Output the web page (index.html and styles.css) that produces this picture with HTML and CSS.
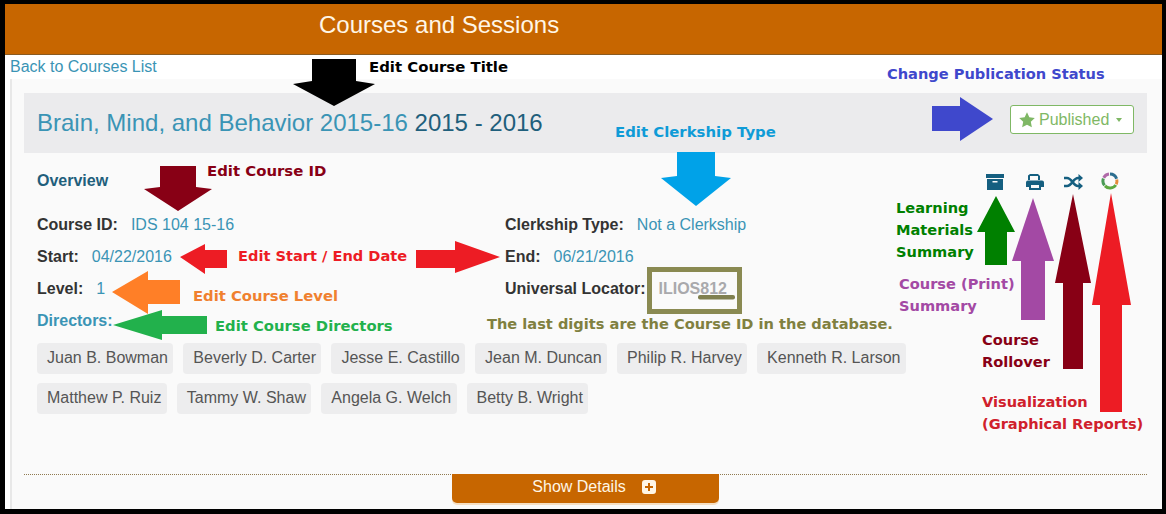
FILE: index.html
```html
<!DOCTYPE html>
<html lang="en">

<head>
    <meta charset="UTF-8">
    <meta name="viewport" content="width=device-width, initial-scale=1.0">
    <title>Courses and Sessions</title>
    <link rel="stylesheet" href="styles.css">
</head>

<body>
    <div class="app">
        <header class="top-bar">
            <h1>Courses and Sessions</h1>
        </header>

        <a class="back-link" href="#">Back to Courses List</a>

        <main class="card">
            <div class="title-bar">
                <h2><a href="#">Brain, Mind, and Behavior 2015-16</a> <span>2015 - 2016</span></h2>
                <button class="publish-btn" type="button">
                    <svg class="star" viewBox="0 0 24 24"><path d="M12 .5l3.500 7.500 8.200 1-6 5.700 1.600 8.200L12 19l-7.300 4 1.600-8.300-6-5.700 8.200-1z"/></svg>
                    Published
                    <span class="caret"></span>
                </button>
            </div>

            <div class="overview-row">
                <h3>Overview</h3>
                <div class="tools">
                    <svg class="tool tool-box" viewBox="0 0 18 16"><path d="M0 0h18v4H0zM1 5h16v11H1zM6.500 7v1.500h5V7z" fill-rule="evenodd"/></svg>
                    <svg class="tool tool-print" viewBox="0 0 18 16"><path d="M4 0h8l2 2v4h-2V2H4v4H2V1.500zM2 6.500h14a2 2 0 0 1 2 2V13h-3v3H3v-3H0V8.500a2 2 0 0 1 2-2zM5 11v3h8v-3z" fill-rule="evenodd"/></svg>
                    <svg class="tool tool-random" viewBox="0 0 19 16">
                        <path class="random-line" d="M0 4h3c5 0 6 8 11 8h1M0 12h3c5 0 6-8 11-8h1"/>
                        <path d="M14.500 0L19 4l-4.500 4zM14.500 8L19 12l-4.500 4z"/>
                    </svg>
                    <svg class="tool tool-donut" viewBox="0 0 18 18" fill="none" stroke-width="3">
                        <path d="M9 2a7 7 0 0 1 6.600 4.700" stroke="#2c6e8f"/>
                        <path d="M15.800 7.500a7 7 0 0 1-.6 4.800" stroke="#e58a3a"/>
                        <path d="M14.800 13a7 7 0 0 1-10.800.9" stroke="#5da83f"/>
                        <path d="M3.500 13.400A7 7 0 0 1 2.400 6.500" stroke="#4a9a55"/>
                        <path d="M2.700 5.700A7 7 0 0 1 8 2.100" stroke="#b06aa8"/>
                    </svg>
                </div>
            </div>

            <div class="details">
                <div class="field"><b>Course ID:</b><a href="#">IDS 104 15-16</a></div>
                <div class="field"><b>Clerkship Type:</b><a href="#">Not a Clerkship</a></div>
                <div class="field"><b>Start:</b><a href="#">04/22/2016</a></div>
                <div class="field"><b>End:</b><a href="#">06/21/2016</a></div>
                <div class="field"><b>Level:</b><a href="#">1</a></div>
                <div class="field"><b>Universal Locator:</b><a class="locator" href="#">ILIOS812</a></div>
            </div>

            <a class="directors-link" href="#">Directors:</a>
            <ul class="chips">
                <li>Juan B. Bowman</li>
                <li>Beverly D. Carter</li>
                <li>Jesse E. Castillo</li>
                <li>Jean M. Duncan</li>
                <li>Philip R. Harvey</li>
                <li>Kenneth R. Larson</li>
                <li>Matthew P. Ruiz</li>
                <li>Tammy W. Shaw</li>
                <li>Angela G. Welch</li>
                <li>Betty B. Wright</li>
            </ul>

            <div class="card-foot">
                <button class="details-btn" type="button">
                    Show Details
                    <svg class="plus" viewBox="0 0 14 14"><path d="M3 0h8a3 3 0 0 1 3 3v8a3 3 0 0 1-3 3H3a3 3 0 0 1-3-3V3a3 3 0 0 1 3-3zM6 3v3H3v2h3v3h2V8h3V6H8V3z" fill-rule="evenodd"/></svg>
                </button>
            </div>
        </main>
    </div>

    <!-- callouts drawn on top of the page -->
    <svg class="arrows" viewBox="0 0 1166 514">
        <polygon fill="#000000" points="312,59 356,59 356,81 375,84 334,106 293,84 312,81"/>
        <polygon fill="#880015" points="160,166 196,166 196,187 212,189 178,211 144,189 160,187"/>
        <polygon fill="#00a2e8" points="677,152 715,152 715,176 731,178 696,206 661,178 677,176"/>
        <polygon fill="#3f48cc" points="932,106 960,106 960,97 993,119 960,141 960,131 932,131"/>
        <polygon fill="#ed1c24" points="227,250 205,250 205,244 180,257 205,274 205,268 227,268"/>
        <polygon fill="#ed1c24" points="416,250 455,250 455,241 500,257 455,273 455,268 416,268"/>
        <polygon fill="#ff7f27" points="180,280 148,280 148,271 112,292 148,314 148,304 180,304"/>
        <polygon fill="#22b14c" points="207,316 162,316 162,310 113,325 162,340 162,334 207,334"/>
        <polygon fill="#008000" points="996,196 1015,232 1007,232 1007,265 985,265 985,232 977,232"/>
        <polygon fill="#a349a4" points="1033,198 1054,261 1045,261 1045,320 1021,320 1021,261 1012,261"/>
        <polygon fill="#880015" points="1073,194 1091,283 1083,283 1083,369 1063,369 1063,283 1055,283"/>
        <polygon fill="#ed1c24" points="1111,193 1131,305 1122,305 1122,412 1100,412 1100,305 1092,305"/>
        <rect class="locator-box" x="649.500" y="269.500" width="90" height="42"/>
        <rect fill="#808050" x="698" y="295" width="37" height="4.500" rx="2"/>
    </svg>

    <div class="note note-title">Edit Course Title</div>
    <div class="note note-publish">Change Publication Status</div>
    <div class="note note-clerkship">Edit Clerkship Type</div>
    <div class="note note-id">Edit Course ID</div>
    <div class="note note-dates">Edit Start / End Date</div>
    <div class="note note-level">Edit Course Level</div>
    <div class="note note-directors">Edit Course Directors</div>
    <div class="note note-digits">The last digits are the Course ID in the database.</div>
    <div class="note note-materials">Learning<br>Materials<br>Summary</div>
    <div class="note note-print">Course (Print)<br>Summary</div>
    <div class="note note-rollover">Course<br>Rollover</div>
    <div class="note note-viz">Visualization<br>(Graphical Reports)</div>
</body>

</html>
```

FILE: styles.css
```css
html, body {
    margin: 0;
    padding: 0;
    height: 514px;
    overflow: hidden;
}

body {
    position: relative;
    background-color: #000000;
    font-family: "Liberation Sans", Arial, sans-serif;
    font-size: 16px;
    color: #333333;
    padding: 4px 4px 5px 5px;
    box-sizing: border-box;
}

a {
    color: #3a94b5;
    text-decoration: none;
}

.app {
    height: 505px;
    background-color: #ffffff;
    display: flex;
    flex-direction: column;
    overflow: hidden;
}

.top-bar {
    height: 51px;
    flex: none;
    box-sizing: border-box;
    background-color: #c76600;
    border-bottom: 1px solid #8a5a20;
    padding-left: 314px;
}

.top-bar h1 {
    margin: 0;
    font-size: 24px;
    font-weight: normal;
    line-height: 42px;
    color: #fff6e6;
}

.back-link {
    flex: none;
    height: 24px;
    padding-left: 5px;
    line-height: 24px;
}

.card {
    flex: 1;
    margin-left: 5px;
    border-left: 2px solid #e8e8e8;
    background-color: #fafafa;
    padding: 14px 15px 0 12px;
    display: flex;
    flex-direction: column;
}

.title-bar {
    height: 60px;
    flex: none;
    background-color: #ebebed;
    padding: 0 13px;
    display: flex;
    align-items: center;
    justify-content: space-between;
}

.title-bar h2 {
    margin: 0;
    font-size: 24px;
    font-weight: normal;
    color: #1f5f7c;
}

.publish-btn {
    width: 124px;
    height: 29px;
    margin-top: -7px;
    box-sizing: border-box;
    background-color: #ffffff;
    border: 1px solid #7fb865;
    border-radius: 3px;
    padding: 0 0 0 8px;
    color: #7fb865;
    font-family: inherit;
    font-size: 16px;
    display: flex;
    align-items: center;
    gap: 4px;
}

.star {
    width: 16px;
    height: 16px;
    fill: #7fb865;
}

.caret {
    margin-left: 3px;
    border-left: 3px solid transparent;
    border-right: 3px solid transparent;
    border-top: 4px solid #7fb865;
}

.overview-row {
    flex: none;
    height: 56px;
    padding-left: 13px;
    padding-right: 28px;
    display: flex;
    justify-content: space-between;
    align-items: flex-start;
}

.overview-row h3 {
    margin: 19px 0 0;
    font-size: 16px;
    line-height: 18px;
    color: #1f5f7c;
}

.tools {
    margin-top: 21px;
    display: flex;
    align-items: center;
    gap: 20px;
    fill: #155f80;
}

.tool {
    display: block;
}

.tool-box {
    width: 18px;
    height: 16px;
    margin-right: 2px;
}

.tool-print {
    width: 18px;
    height: 16px;
}

.tool-random {
    width: 19px;
    height: 16px;
}

.random-line {
    fill: none;
    stroke: #155f80;
    stroke-width: 2.6;
}

.tool-donut {
    width: 18px;
    height: 18px;
    margin-top: -2px;
    margin-left: -2px;
}

.details {
    flex: none;
    margin-left: 13px;
    display: grid;
    grid-template-columns: 468px 1fr;
    grid-auto-rows: 32px;
}

.field {
    display: flex;
    gap: 13px;
    line-height: 32px;
}

.locator {
    color: #a9a9ac;
    font-weight: bold;
}

.directors-link {
    flex: none;
    margin-left: 13px;
    margin-top: 4px;
    font-weight: bold;
    line-height: 24px;
}

.chips {
    list-style: none;
    flex: none;
    margin: 10px 220px 0 13px;
    padding: 0;
    display: flex;
    flex-wrap: wrap;
    gap: 9px 10px;
}

.chips li {
    height: 31px;
    line-height: 29px;
    padding: 0 5.400px 0 10px;
    background-color: #ededee;
    border-radius: 4px;
    color: #555555;
}

.card-foot {
    flex: none;
    margin-top: 60px;
    border-top: 1px dotted #8f7a50;
    display: flex;
    justify-content: center;
}

.details-btn {
    width: 267px;
    height: 29px;
    margin-top: -1px;
    padding: 0 0 3px 17px;
    background-color: #c76600;
    border: none;
    border-radius: 0 0 5px 5px;
    box-shadow: 0 2px 0 #f5dfc4;
    color: #fff6e6;
    font-family: inherit;
    font-size: 16px;
    display: flex;
    align-items: center;
    justify-content: center;
    gap: 16px;
}

.plus {
    width: 14px;
    height: 14px;
    fill: #fff6e6;
}

.arrows {
    position: absolute;
    top: 0;
    left: 0;
    width: 1166px;
    height: 514px;
}

.locator-box {
    fill: none;
    stroke: #8a8a52;
    stroke-width: 5;
}

.note {
    position: absolute;
    font-family: "DejaVu Sans", Verdana, sans-serif;
    font-size: 14.600px;
    font-weight: bold;
    line-height: 22px;
    white-space: nowrap;
}

.note-title { left: 369px; top: 56px; color: #000000; font-size: 14.900px; }
.note-publish { left: 887px; top: 63px; color: #3f48cc; }
.note-clerkship { left: 615px; top: 121px; color: #0f9bd7; font-size: 14.900px; }
.note-id { left: 207px; top: 160px; color: #880015; font-size: 14.900px; }
.note-dates { left: 238px; top: 245px; color: #ed1c24; }
.note-level { left: 193px; top: 285px; color: #f0802f; font-size: 14.800px; }
.note-directors { left: 215px; top: 315px; color: #22b14c; font-size: 14.800px; }
.note-digits { left: 487px; top: 313px; color: #808040; }
.note-materials { left: 896px; top: 197px; color: #008000; }
.note-print { left: 899px; top: 273px; color: #a349a4; }
.note-rollover { left: 982px; top: 329px; color: #880015; }
.note-viz { left: 982px; top: 391px; color: #d0202c; }
```
